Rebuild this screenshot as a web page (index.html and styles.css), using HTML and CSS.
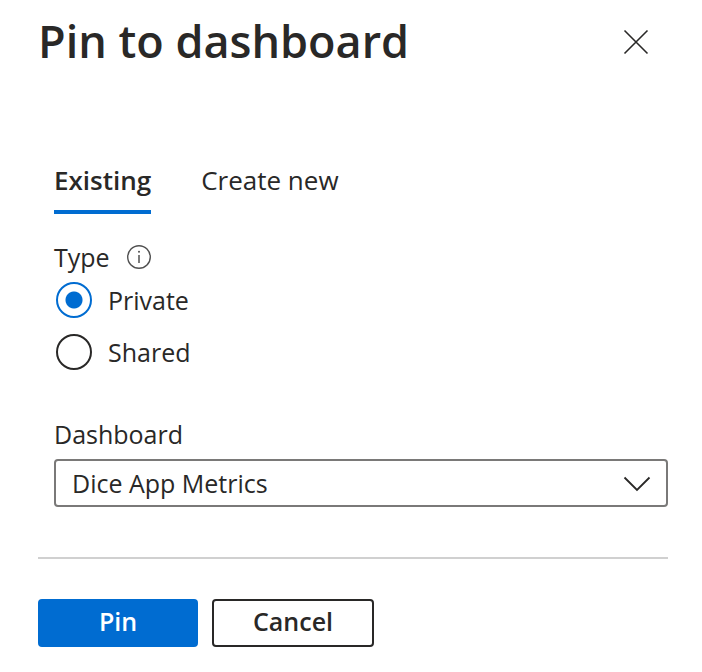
FILE: index.html
```html
<!DOCTYPE html>
<html lang="en">
<head>
<meta charset="utf-8">
<meta name="viewport" content="width=device-width, initial-scale=1">
<title>Pin to dashboard</title>
<link rel="stylesheet" href="styles.css">
</head>
<body>
<main class="panel">
  <header class="panel-header">
    <h1 class="title">Pin to dashboard</h1>
    <button class="close" type="button" aria-label="Close">
      <svg width="26" height="26" viewBox="0 0 26 26" fill="none" stroke="currentColor" stroke-width="1.6" aria-hidden="true"><path d="M1.5 1.5 24.5 24.5M24.5 1.5 1.5 24.5"/></svg>
    </button>
  </header>
  <form class="form">
    <div class="fields">
      <div class="tabs" role="tablist">
        <button class="tab tab-active" type="button" role="tab" aria-selected="true">Existing</button>
        <button class="tab" type="button" role="tab" aria-selected="false">Create new</button>
      </div>
      <fieldset class="type">
        <legend class="legend">
          <span>Type</span>
          <svg class="info" width="26" height="26" viewBox="0 0 26 26" fill="none" stroke="currentColor" aria-hidden="true"><circle cx="13" cy="13" r="11.3" stroke-width="1.4"/><path d="M13 11v8" stroke-width="1.5"/><circle cx="13" cy="7.7" r="1" fill="currentColor" stroke="none"/></svg>
        </legend>
        <label class="option"><input class="radio" type="radio" name="type" checked><span>Private</span></label>
        <label class="option"><input class="radio" type="radio" name="type"><span>Shared</span></label>
      </fieldset>
      <label class="label" for="dashboard">Dashboard</label>
      <div class="select-wrap">
        <select class="select" id="dashboard"><option>Dice App Metrics</option></select>
        <svg class="chevron" width="28" height="16" viewBox="0 0 28 16" fill="none" stroke="currentColor" stroke-width="1.8" aria-hidden="true"><path d="M1.5 1.5 14 14 26.5 1.5"/></svg>
      </div>
    </div>
    <footer class="actions">
      <button class="button button-primary" type="button">Pin</button>
      <button class="button" type="button">Cancel</button>
    </footer>
  </form>
</main>
</body>
</html>
```

FILE: styles.css
```css
* { box-sizing: border-box; }

body {
  margin: 0;
  background: #fff;
  color: #292827;
  font: 25px/32px "Open Sans", "Noto Sans", sans-serif;
}

button, select { font: inherit; color: inherit; }

.panel { padding: 8px 34px 24px 38px; }

.panel-header {
  display: flex;
  align-items: center;
  justify-content: space-between;
}

.title {
  margin: 0;
  padding-bottom: 2px;
  font-size: 45px;
  line-height: 66px;
  font-weight: 600;
}

.close {
  display: flex;
  margin-right: 12px;
  padding: 7px;
  border: 0;
  background: none;
}

.fields { padding: 84px 0 50px 16px; }

.tabs { display: flex; gap: 50px; }

.tab {
  padding: 4px 0 14px;
  border: 0;
  border-bottom: 4px solid transparent;
  background: none;
  font-size: 26px;
}

.tab-active {
  border-color: #006cd1;
  font-weight: 600;
}

.type {
  display: grid;
  gap: 16px;
  margin: 27px 0 48px;
  padding: 0;
  border: 0;
}

.legend {
  display: flex;
  align-items: center;
  gap: 16px;
  padding: 0 0 9px;
}

.info { color: #505050; }

.option {
  display: flex;
  align-items: center;
  gap: 16px;
  padding-left: 2px;
}

.radio {
  appearance: none;
  width: 36px;
  height: 36px;
  margin: 0;
  border: 2px solid #292827;
  border-radius: 50%;
}

.radio:checked {
  border-color: #006cd1;
  background: radial-gradient(circle, #006cd1 8px, #fff 9px);
}

.label { display: block; padding-bottom: 9px; }

.select-wrap { position: relative; }

.select {
  display: block;
  width: 100%;
  height: 48px;
  padding: 0 56px 0 16px;
  appearance: none;
  border: 2px solid #7a7978;
  border-radius: 4px;
  background: #fff;
}

.chevron {
  position: absolute;
  top: 17px;
  right: 17px;
  pointer-events: none;
}

.actions {
  display: flex;
  gap: 14px;
  padding-top: 40px;
  border-top: 2px solid #d0d0d0;
}

.button {
  width: 162px;
  height: 48px;
  padding: 0 0 4px;
  border: 2px solid #292827;
  border-radius: 4px;
  background: #fff;
  font-weight: 600;
}

.button-primary {
  width: 160px;
  border-color: #006cd1;
  background: #006cd1;
  color: #fff;
}
```
